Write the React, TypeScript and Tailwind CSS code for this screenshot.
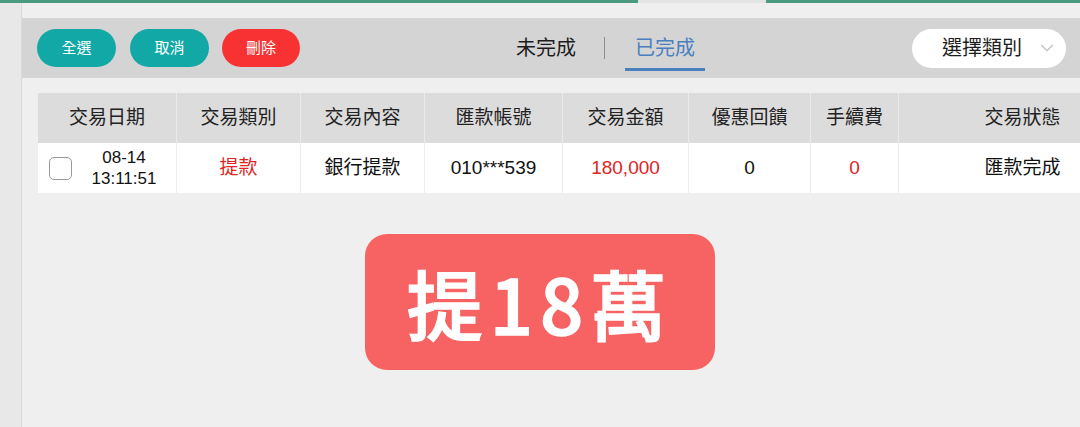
import { ChevronDown } from "lucide-react";

const font = "font-['Liberation_Sans','Noto_Sans_CJK_TC',sans-serif]";

const columns = [
  { label: "交易日期", w: "w-[138px]" },
  { label: "交易類別", w: "w-[124px]" },
  { label: "交易內容", w: "w-[124px]" },
  { label: "匯款帳號", w: "w-[138px]" },
  { label: "交易金額", w: "w-[126px]" },
  { label: "優惠回饋", w: "w-[122px]" },
  { label: "手續費", w: "w-[88px]" },
  { label: "交易狀態", w: "w-[248px]" },
];

export default function App() {
  return (
    <div className={`${font} w-[1080px] h-[427px] overflow-hidden bg-[#e9e9e9] flex flex-col`}>
      {/* top progress strip */}
      <div className="flex h-[3px] shrink-0">
        <div className="w-[638px] bg-[#4a9a80]" />
        <div className="w-[128px] bg-[#e4e4e4]" />
        <div className="flex-1 bg-[#4a9a80]" />
      </div>

      <div className="flex flex-1">
        <div className="w-[22px] shrink-0 bg-[#e8e8e8] border-r border-[#d9d9d9]" />

        <main className="flex-1 bg-[#efefef] pt-[15px] overflow-hidden">
          {/* toolbar */}
          <div className="h-[60px] bg-[#d4d4d4] flex items-center pl-[15px] pr-[14px]">
            <div className="flex gap-[14px] items-center w-[420px]">
              <button className="w-[79px] h-[38px] rounded-full bg-[#12a8a6] text-white text-[15px]">全選</button>
              <button className="w-[79px] h-[38px] rounded-full bg-[#12a8a6] text-white text-[15px]">取消</button>
              <button className="w-[78px] h-[38px] rounded-full bg-[#f83232] text-white text-[15px] -ml-[1px]">刪除</button>
            </div>

            <div className="flex items-center text-[20px] h-full ml-[59px]">
              <span className="text-[#1d1d1d]">未完成</span>
              <span className="ml-[28px] mr-[20px] w-px h-[22px] bg-[#8e8e8e]" />
              <div className="relative h-full flex items-center px-[10px]">
                <span className="text-[#4a7fc0]">已完成</span>
                <span className="absolute left-0 right-0 bottom-[7px] h-[3px] bg-[#4a7fc0]" />
              </div>
            </div>

            <div className="ml-auto w-[154px] h-[39px] rounded-full bg-white flex items-center pl-[30px] pr-[8px]">
              <span className="text-[20px] text-[#1d1d1d]">選擇類別</span>
              <ChevronDown className="ml-auto w-[22px] h-[22px] text-[#c4c4c4]" strokeWidth={1.5} />
            </div>
          </div>

          {/* table */}
          <div className="pl-[16px] pt-[15px]">
            <div className="w-[1300px]">
              <div className="flex h-[50px] bg-[#dcdcdc]">
                {columns.map((c, i) => (
                  <div
                    key={c.label}
                    className={`${c.w} shrink-0 flex items-center justify-center text-[19px] text-[#222] ${i > 0 ? "border-l border-[#eaeaea]" : ""}`}
                  >
                    {c.label}
                  </div>
                ))}
              </div>
              <div className="flex h-[50px] bg-white text-[19px] text-[#111]">
                <div className="w-[138px] shrink-0 flex items-center pl-[11px]">
                  <span className="w-[23px] h-[23px] rounded-[5px] border border-[#9a9a9a] bg-white" />
                  <div className="flex-1 text-center text-[17px] leading-[21px]">
                    <div>08-14</div>
                    <div>13:11:51</div>
                  </div>
                </div>
                <div className="w-[124px] shrink-0 flex items-center justify-center border-l border-[#ececec] text-[#e02424]">提款</div>
                <div className="w-[124px] shrink-0 flex items-center justify-center border-l border-[#ececec]">銀行提款</div>
                <div className="w-[138px] shrink-0 flex items-center justify-center border-l border-[#ececec]">010***539</div>
                <div className="w-[126px] shrink-0 flex items-center justify-center border-l border-[#ececec] text-[#e02424]">180,000</div>
                <div className="w-[122px] shrink-0 flex items-center justify-center border-l border-[#ececec]">0</div>
                <div className="w-[88px] shrink-0 flex items-center justify-center border-l border-[#ececec] text-[#e02424]">0</div>
                <div className="w-[248px] shrink-0 flex items-center justify-center border-l border-[#ececec]">匯款完成</div>
              </div>
            </div>
          </div>

          {/* highlight badge */}
          <div className="flex justify-center pt-[41px] pr-[22px]">
            <div className="w-[350px] h-[136px] rounded-[22px] bg-[#f76262] flex items-center justify-center">
              <span className="text-white font-medium text-[76px] tracking-[7px] [-webkit-text-stroke:1.5px_white] font-['Noto_Sans_CJK_TC',sans-serif] leading-none">
                提18萬
              </span>
            </div>
          </div>
        </main>
      </div>
    </div>
  );
}
